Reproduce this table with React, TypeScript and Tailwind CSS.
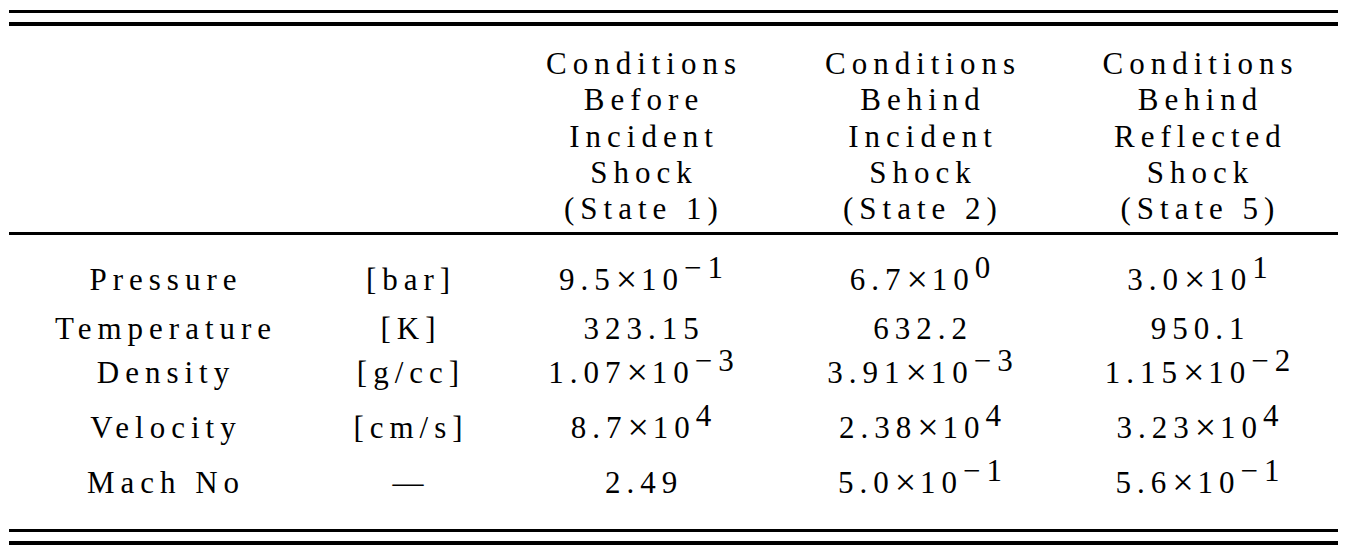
import React from "react";

type Cell = { mant: string; exp?: string };

interface Row {
  label: string;
  unit: string;
  values: Cell[];
  height: string; // row height, so the baselines land where the reference has them
}

const headers = [
  ["Conditions", "Before", "Incident", "Shock", "(State 1)"],
  ["Conditions", "Behind", "Incident", "Shock", "(State 2)"],
  ["Conditions", "Behind", "Reflected", "Shock", "(State 5)"],
];

const rows: Row[] = [
  {
    label: "Pressure",
    unit: "[bar]",
    values: [
      { mant: "9.5", exp: "−1" },
      { mant: "6.7", exp: "0" },
      { mant: "3.0", exp: "1" },
    ],
    height: "h-[48.7px]",
  },
  {
    label: "Temperature",
    unit: "[K]",
    values: [{ mant: "323.15" }, { mant: "632.2" }, { mant: "950.1" }],
    height: "h-[44.6px]",
  },
  {
    label: "Density",
    unit: "[g/cc]",
    values: [
      { mant: "1.07", exp: "−3" },
      { mant: "3.91", exp: "−3" },
      { mant: "1.15", exp: "−2" },
    ],
    height: "h-[54.7px]",
  },
  {
    label: "Velocity",
    unit: "[cm/s]",
    values: [
      { mant: "8.7", exp: "4" },
      { mant: "2.38", exp: "4" },
      { mant: "3.23", exp: "4" },
    ],
    height: "h-[54.7px]",
  },
  {
    label: "Mach No",
    unit: "—",
    values: [
      { mant: "2.49" },
      { mant: "5.0", exp: "−1" },
      { mant: "5.6", exp: "−1" },
    ],
    height: "h-[36px]",
  },
];

const cols = "grid grid-cols-[308px_182px_284px_274px_281px]";

// number, optionally written as mantissa × 10^exp
const Value: React.FC<{ cell: Cell }> = ({ cell }) => {
  if (!cell.exp) return <>{cell.mant}</>;
  return (
    <>
      {cell.mant}
      <span className="relative top-[2px] text-[38px] leading-[0] tracking-[4px]">×</span>
      10
      <sup className="text-[100%] -top-[12px]">{cell.exp}</sup>
    </>
  );
};

export default function App() {
  return (
    <div className="min-h-[555px] w-[1345px] bg-white text-black font-['Liberation_Serif',serif] text-[31px] tracking-[6px]">
      <div className="ml-[9px] w-[1329px] pt-[10px]">
        {/* top double rule */}
        <div className="h-[3px] bg-black" />
        <div className="mt-[9px] h-[4px] bg-black" />

        {/* header */}
        <div className={`${cols} pt-[20px] pb-[4.75px] leading-[36.25px] text-center`}>
          <div />
          <div />
          {headers.map((lines, i) => (
            <div key={i} className="pl-[6px]">
              {lines.map((l, j) => (
                <div key={j}>{l}</div>
              ))}
            </div>
          ))}
        </div>
        <div className="h-[3px] bg-black" />

        {/* body */}
        <div className="pt-[27.2px] pb-[28px] leading-[36px] text-center">
          {rows.map((row) => (
            <div key={row.label} className={`${cols} ${row.height}`}>
              <div className="pl-[6px]">{row.label}</div>
              <div className="pl-[6px]">{row.unit}</div>
              {row.values.map((v, i) => (
                <div key={i} className="pl-[6px]">
                  <Value cell={v} />
                </div>
              ))}
            </div>
          ))}
        </div>

        {/* bottom double rule */}
        <div className="h-[3px] bg-black" />
        <div className="mt-[9px] h-[4px] bg-black" />
      </div>
    </div>
  );
}
